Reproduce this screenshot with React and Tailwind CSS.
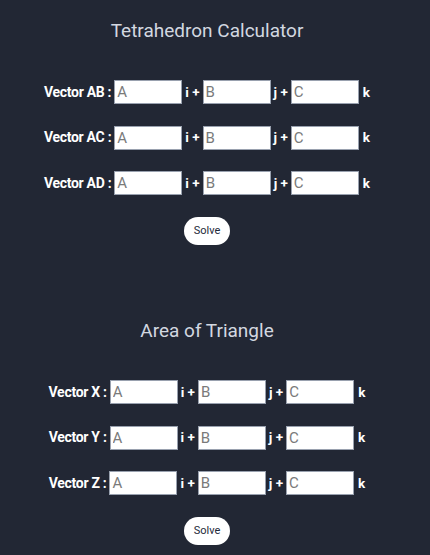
import React from 'react';

const tetraRows = ['AB', 'AC', 'AD'];
const triRows = ['X', 'Y', 'Z'];

function VectorRow({ name }) {
  return (
    <div className="flex items-center justify-center gap-[3px] text-[13.5px] font-bold text-white">
      <span className="text-[14px] tracking-[-0.3px]">Vector {name} :</span>
      <input
        placeholder="A"
        className="w-[68px] h-[24px] bg-white border border-gray-400 px-[2px] text-[15px] font-normal text-gray-700 placeholder:text-[#7a7a7a] outline-none"
      />
      <span>i +</span>
      <input
        placeholder="B"
        className="w-[68px] h-[24px] bg-white border border-gray-400 px-[2px] text-[15px] font-normal text-gray-700 placeholder:text-[#7a7a7a] outline-none"
      />
      <span>j +</span>
      <input
        placeholder="C"
        className="w-[68px] h-[24px] bg-white border border-gray-400 px-[2px] text-[15px] font-normal text-gray-700 placeholder:text-[#7a7a7a] outline-none"
      />
      <span className="ml-[1px]">k</span>
    </div>
  );
}

function Section({ title, rows }) {
  return (
    <section className="flex flex-col items-center">
      <h2 className="text-[19px] leading-[28px] text-[#d3d8e0]">{title}</h2>
      <div className="mt-[35px] flex flex-col gap-[21.5px] w-full">
        {rows.map((r) => (
          <VectorRow key={r} name={r} />
        ))}
      </div>
      <button className="mt-[22px] h-[28px] px-[10px] rounded-full bg-white text-[11px] text-gray-800">
        Solve
      </button>
    </section>
  );
}

export default function App() {
  return (
    <div
      className="min-h-[555px] bg-[#222734] pt-[17px] pr-[16px]"
      style={{ fontFamily: 'Roboto, "Noto Sans", sans-serif' }}
    >
      <Section title="Tetrahedron Calculator" rows={tetraRows} />
      <div className="h-[72px]" />
      <Section title="Area of Triangle" rows={triRows} />
    </div>
  );
}
